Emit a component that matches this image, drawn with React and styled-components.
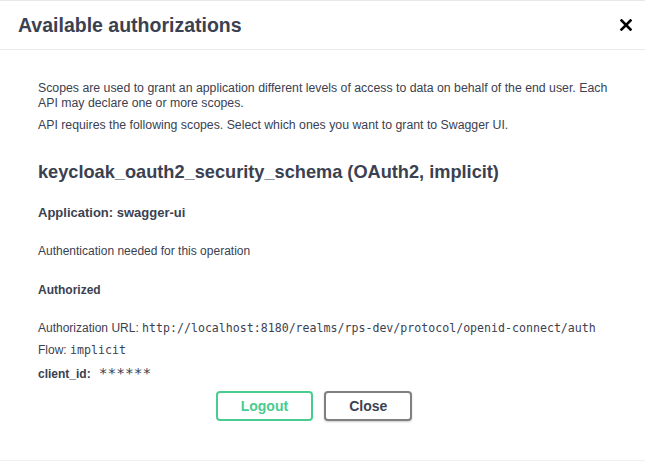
import React from "react";
import styled, { createGlobalStyle } from "styled-components";

const Global = createGlobalStyle`
  html, body { margin: 0; padding: 0; background: #fff; }
  body { font-family: "Liberation Sans", Arial, sans-serif; color: #3b4151; }
`;

const Modal = styled.div`
  width: 645px;
  height: 461px;
  box-sizing: border-box;
  border-top: 1px solid #e8e8e8;
  border-bottom: 1px solid #f0f0f0;
  display: flex;
  flex-direction: column;
  background: #fff;
`;

const Header = styled.div`
  height: 48px;
  border-bottom: 1px solid #ebebeb;
  display: flex;
  align-items: center;
  padding: 0 13px 0 18px;
`;

const Title = styled.h3`
  flex: 1;
  margin: 0;
  font-size: 19.5px;
  font-weight: 700;
  color: #3b4151;
`;

const CloseX = styled.button`
  border: 0;
  background: none;
  padding: 0;
  width: 12px;
  height: 12px;
  display: flex;
  cursor: pointer;
`;

const Content = styled.div`
  padding: 31px 28px 0 38px;
  display: flex;
  flex-direction: column;
`;

const Text = styled.p`
  margin: ${(p) => p.$mt || 0}px 0 0;
  font-size: ${(p) => p.$size || 12}px;
  line-height: 15px;
  color: #3b4151;
  font-weight: ${(p) => (p.$bold ? 700 : 400)};
`;

const Heading = styled.h4`
  margin: 28px 0 0;
  font-size: 18.2px;
  line-height: 22px;
  font-weight: 700;
  color: #3b4151;
`;

const SubHeading = styled.h6`
  margin: 22px 0 0;
  font-size: 13px;
  line-height: 16px;
  font-weight: 700;
  color: #3b4151;
`;

const Code = styled.code`
  font-family: "DejaVu Sans Mono", "Liberation Mono", monospace;
  font-size: ${(p) => p.$size || 11.6}px;
  color: #3b4151;
`;

const Label = styled.label`
  font-weight: 700;
  font-size: 12px;
  margin-right: 8px;
`;

const Buttons = styled.div`
  display: flex;
  justify-content: center;
  gap: 11px;
  margin-top: 9px;
  padding-right: 27px;
`;

const Btn = styled.button`
  height: 30px;
  padding: 0 23px;
  box-sizing: border-box;
  border-radius: 4px;
  background: #fff;
  font-family: "Liberation Sans", Arial, sans-serif;
  font-weight: 700;
  font-size: 14px;
  border: 2px solid ${(p) => (p.$green ? "#49cc90" : "#808080")};
  color: ${(p) => (p.$green ? "#49cc90" : "#3b4151")};
  box-shadow: ${(p) => (p.$green ? "none" : "0 1px 2px rgba(0,0,0,0.2)")};
  cursor: pointer;
`;

export default function App() {
  return (
    <>
      <Global />
      <Modal>
        <Header>
          <Title>Available authorizations</Title>
          <CloseX aria-label="close">
            <svg width="12" height="12" viewBox="0 0 12 12">
              <path d="M1.5 1.5 L10.5 10.5 M10.5 1.5 L1.5 10.5" stroke="#000" strokeWidth="2.6" strokeLinecap="square" />
            </svg>
          </CloseX>
        </Header>
        <Content>
          <Text $size={12.3}>
            Scopes are used to grant an application different levels of access to data on behalf of the end user. Each API may declare one or more scopes.
          </Text>
          <Text $size={12.3} $mt={7}>API requires the following scopes. Select which ones you want to grant to Swagger UI.</Text>
          <Heading>keycloak_oauth2_security_schema (OAuth2, implicit)</Heading>
          <SubHeading>Application: swagger-ui</SubHeading>
          <Text $mt={23}>Authentication needed for this operation</Text>
          <Text $mt={24} $bold>Authorized</Text>
          <Text $mt={23}>
            Authorization URL: <Code>http://localhost:8180/realms/rps-dev/protocol/openid-connect/auth</Code>
          </Text>
          <Text $mt={7}>
            Flow: <Code>implicit</Code>
          </Text>
          <Text $mt={7}>
            <Label>client_id:</Label>
            <Code $size={14.6}>******</Code>
          </Text>
          <Buttons>
            <Btn $green>Logout</Btn>
            <Btn>Close</Btn>
          </Buttons>
        </Content>
      </Modal>
    </>
  );
}
